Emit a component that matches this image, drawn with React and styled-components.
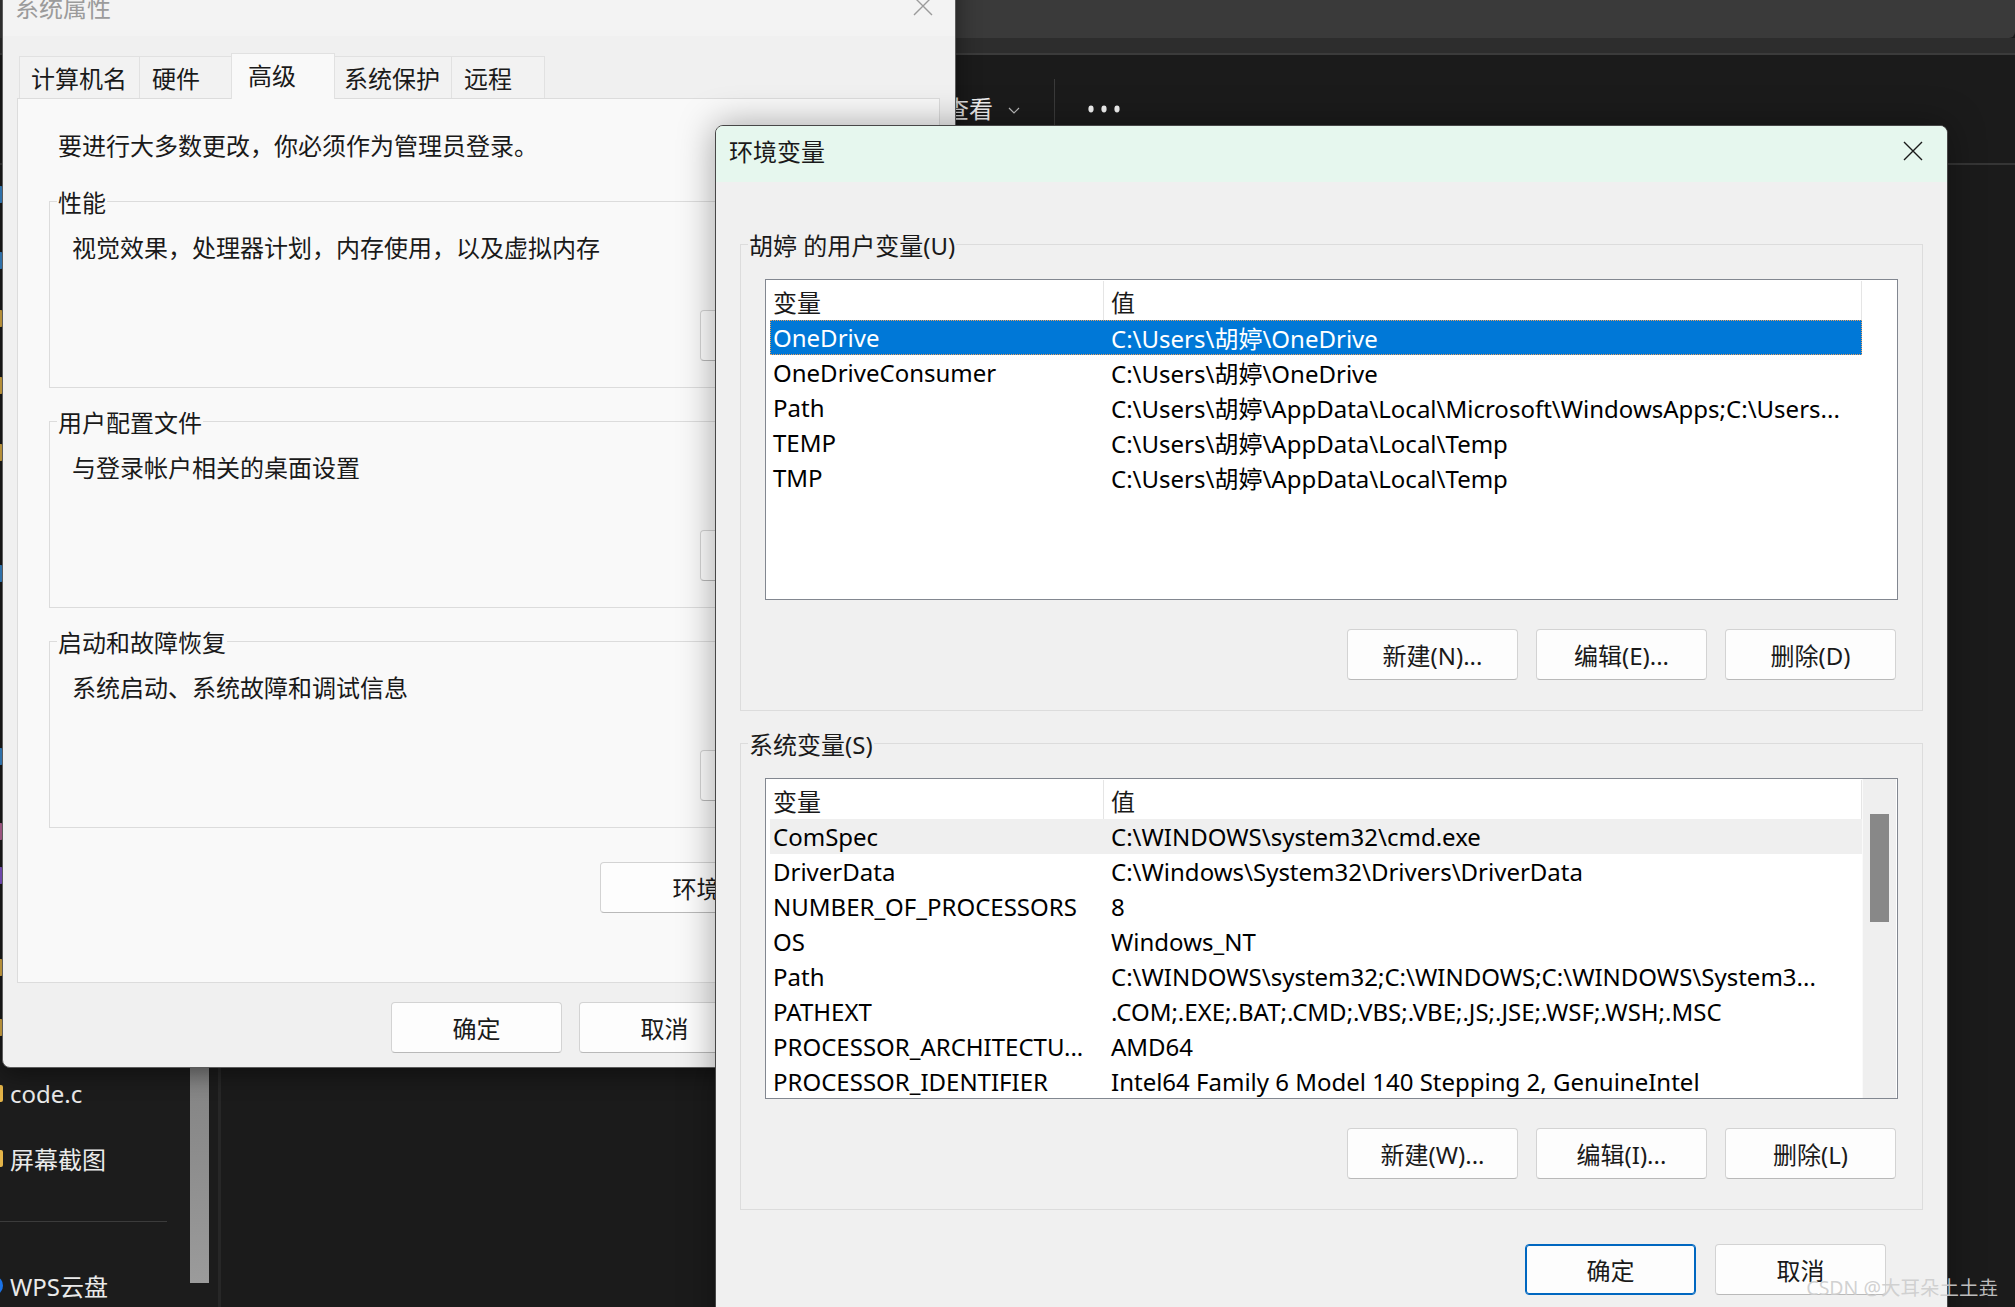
import React from "react";
import styled, { createGlobalStyle, css } from "styled-components";

const GlobalStyle = createGlobalStyle`
  html, body {
    margin: 0;
    padding: 0;
    background: #1b1b1b;
  }
  body {
    width: 2015px;
    height: 1307px;
    overflow: hidden;
    font-family: "Noto Sans", "Noto Sans CJK SC", sans-serif;
    font-size: 24px;
  }
`;

// ---- dark explorer window behind the dialogs ----

const Desktop = styled.div`
  position: relative;
  width: 2015px;
  height: 1307px;
  overflow: hidden;
  background: #1b1b1b;
  display: flex;
  flex-direction: column;
`;

const CaptionBand = styled.div`
  height: 38px;
  flex-shrink: 0;
  background: #3a3a3a;
  border-bottom-right-radius: 6px;
`;

const AddressBand = styled.div`
  height: 15px;
  flex-shrink: 0;
  background: #2d2d2d;
  border-bottom: 2px solid #3b3b3b;
`;

const Toolbar = styled.div`
  height: 108px;
  flex-shrink: 0;
  display: flex;
  align-items: center;
  padding-left: 945px;
  border-bottom: 2px solid #353535;
  color: #f3f3f3;
  font-size: 24px;
`;

const ToolText = styled.span`
  line-height: 1;
`;

const Chevron = styled.svg`
  margin-left: 15px;
  margin-top: 4px;
`;

const ToolSeparator = styled.div`
  width: 1px;
  height: 60px;
  background: #3a3a3a;
  margin-left: 34px;
`;

const MoreDots = styled.svg`
  margin-left: 33px;
`;

const MainRow = styled.div`
  flex: 1;
  display: flex;
  min-height: 0;
`;

const Sidebar = styled.div`
  width: 218px;
  flex-shrink: 0;
  display: flex;
  border-right: 3px solid #272727;
  background: #1c1c1c;
`;

const NavList = styled.div`
  width: 190px;
  display: flex;
  flex-direction: column;
  justify-content: flex-end;
  overflow: hidden;
`;

const NavItem = styled.div`
  height: 44px;
  flex-shrink: 0;
  display: flex;
  align-items: center;
  margin-top: ${(p) => p.$gap}px;
  color: #eaeaea;
  font-size: 24px;
  white-space: nowrap;
`;

const NavIcon = styled.span`
  width: 14px;
  height: 17px;
  margin-left: -11px;
  margin-right: 7px;
  border-radius: ${(p) => (p.$round ? "50%" : "2px")};
  background: ${(p) => p.$color};
  flex-shrink: 0;
`;

const NavDivider = styled.div`
  width: 167px;
  height: 1px;
  flex-shrink: 0;
  background: #3b3b3b;
  margin-top: 41px;
`;

const ScrollTrack = styled.div`
  width: 19px;
  display: flex;
  flex-direction: column;
  justify-content: flex-end;
  padding-bottom: 24px;
`;

const ScrollThumb = styled.div`
  height: 420px;
  background: linear-gradient(#6c6c6c, #9b9b9b);
`;

const ContentArea = styled.div`
  flex: 1;
  background: #1b1b1b;
`;

// ---- generic window pieces ----

const Window = styled.div`
  position: absolute;
  box-sizing: border-box;
  display: flex;
  flex-direction: column;
  overflow: hidden;
  color: #1a1a1a;
`;

const SysWindow = styled(Window)`
  left: 2px;
  top: -30px;
  width: 954px;
  height: 1098px;
  background: #f0f0f0;
  border: 1px solid #5c5c5c;
  border-radius: 8px;
  box-shadow: 0 6px 24px rgba(0, 0, 0, 0.45);
`;

const EnvWindow = styled(Window)`
  left: 715px;
  top: 125px;
  width: 1233px;
  height: 1250px;
  background: #f0f0f0;
  border: 1px solid #474747;
  border-radius: 8px 8px 0 0;
  box-shadow: 0 0 36px rgba(0, 0, 0, 0.35);
`;

const TitleBar = styled.div`
  flex-shrink: 0;
  display: flex;
  align-items: center;
  justify-content: space-between;
  box-sizing: border-box;
  ${(p) =>
    p.$active
      ? css`
          height: 56px;
          padding: 0 24px 7px 13px;
          background: #e6f7ee;
          color: #1a1a1a;
        `
      : css`
          height: 65px;
          padding: 5px 22px 0 12px;
          background: #f3f3f3;
          color: #9b9b9b;
        `}
`;

const CloseGlyph = ({ color }) => (
  <svg width="20" height="20" viewBox="0 0 20 20">
    <path d="M1 1 L19 19 M19 1 L1 19" stroke={color} strokeWidth="1.4" fill="none" />
  </svg>
);

const PushButton = styled.button`
  width: ${(p) => p.$w || 171}px;
  height: 51px;
  flex-shrink: 0;
  box-sizing: border-box;
  padding: 0 ${(p) => p.$shift || 0}px 0 0;
  border: 1px solid #d3d3d3;
  border-bottom-color: #b9b9b9;
  border-radius: 4px;
  background: #fdfdfd;
  color: #1a1a1a;
  font-family: inherit;
  font-size: 24px;
  ${(p) =>
    p.$primary &&
    css`
      border-color: #0067c0;
      box-shadow: inset 0 0 0 1px #0067c0;
    `}
`;

const ButtonRow = styled.div`
  display: flex;
  justify-content: flex-end;
  gap: ${(p) => p.$gap || 18}px;
  margin-top: ${(p) => p.$top || 0}px;
  padding-right: ${(p) => p.$right || 0}px;
`;

const Group = styled.fieldset`
  margin: 0;
  padding: 0;
  min-width: 0;
  border: 1px solid #dcdcdc;
  margin-top: ${(p) => p.$top || 0}px;
`;

const GroupLabel = styled.legend`
  margin-left: 7px;
  padding: 4px 1px 0 1px;
  line-height: 30px;
  font-size: 24px;
  color: #1a1a1a;
`;

// ---- system properties dialog ----

const SysBody = styled.div`
  flex: 1;
  display: flex;
  flex-direction: column;
  padding: 17px 15px 0 14px;
`;

const TabStrip = styled.div`
  display: flex;
  align-items: flex-end;
  height: 45px;
  padding-left: 3px;
`;

const Tab = styled.div`
  width: ${(p) => p.$w}px;
  box-sizing: border-box;
  display: flex;
  align-items: center;
  padding-left: ${(p) => p.$pad}px;
  margin-left: -1px;
  border: 1px solid #e1e1e1;
  border-bottom: none;
  font-size: 24px;
  ${(p) =>
    p.$active
      ? css`
          height: 46px;
          margin-bottom: -1px;
          padding-bottom: 5px;
          position: relative;
          z-index: 2;
          background: #f9f9f9;
        `
      : css`
          height: 42px;
          padding-bottom: 1px;
          background: #f2f2f2;
        `}
`;

const TabPanel = styled.div`
  height: 885px;
  box-sizing: border-box;
  border: 1px solid #dcdcdc;
  background: #f9f9f9;
  padding: 29px 30px 0 40px;
  display: flex;
  flex-direction: column;
`;

const Notice = styled.div`
  line-height: 35px;
`;

const SysGroup = styled(Group)`
  margin-left: -9px;
  margin-top: ${(p) => p.$top}px;
`;

const SysGroupBody = styled.div`
  display: flex;
  flex-direction: column;
  padding: 12px 18px 26px 22px;
`;

const GroupText = styled.div`
  line-height: 35px;
`;

const SysFooter = styled(ButtonRow)`
  margin-top: 19px;
  padding-right: 2px;
`;

// ---- environment variables dialog ----

const EnvBody = styled.div`
  flex: 1;
  display: flex;
  flex-direction: column;
  padding: 45px 24px 0 24px;
`;

const EnvGroupBody = styled.div`
  display: flex;
  flex-direction: column;
  padding: 18px 24px 30px 24px;
`;

const ListBox = styled.div`
  height: 321px;
  box-sizing: border-box;
  display: flex;
  border: 1px solid #828790;
  background: #fff;
  padding: 1px 0 0 4px;
  overflow: hidden;
`;

const ListTable = styled.div`
  width: 1092px;
  flex-shrink: 0;
  display: flex;
  flex-direction: column;
`;

const HeaderRow = styled.div`
  height: 39px;
  flex-shrink: 0;
  display: flex;
`;

const HeaderCell = styled.div`
  box-sizing: border-box;
  width: ${(p) => p.$w}px;
  padding: 1px 0 0 ${(p) => p.$pad}px;
  display: flex;
  align-items: center;
  border-right: 1px solid #e5e5e5;
  color: #1a1a1a;
`;

const Row = styled.div`
  height: 35px;
  flex-shrink: 0;
  box-sizing: border-box;
  display: flex;
  align-items: center;
  color: #000;
  ${(p) =>
    p.$state === "selected" &&
    css`
      background: #0078d7;
      color: #fff;
      outline: 1px dotted #e7a061;
      outline-offset: -1px;
    `}
  ${(p) =>
    p.$state === "hover" &&
    css`
      background: #efefef;
    `}
`;

const Cell = styled.div`
  box-sizing: border-box;
  width: ${(p) => (p.$w ? `${p.$w}px` : "auto")};
  flex: ${(p) => (p.$w ? "0 0 auto" : "1")};
  padding-left: ${(p) => p.$pad}px;
  white-space: nowrap;
  overflow: hidden;
`;

const Gutter = styled.div`
  width: 34px;
  flex-shrink: 0;
  margin-top: -1px;
  background: ${(p) => (p.$scroll ? "#efefef" : "#fff")};
  border-left: ${(p) => (p.$scroll ? "1px solid #fafafa" : "none")};
  box-sizing: border-box;
  padding: 35px 7px 0 7px;
`;

const GutterThumb = styled.div`
  height: 108px;
  background: #888;
`;

const EnvFooter = styled(ButtonRow)`
  margin-top: 34px;
  padding-right: 37px;
`;

const Watermark = styled.div`
  position: absolute;
  right: 17px;
  top: 1274px;
  font-size: 19.5px;
  line-height: 28px;
  color: rgba(205, 205, 205, 0.92);
  white-space: nowrap;
`;

const navItems = [
  { label: "此电脑", color: "#3c8fd6", gap: 9 },
  { label: "桌面", color: "#3c8fd6", gap: 22 },
  { label: "下载", color: "#e4b448", gap: 14 },
  { label: "文档", color: "#e4b448", gap: 23 },
  { label: "图片", color: "#e4b448", gap: 23 },
  { label: "音乐", color: "#3c8fd6", gap: 77 },
  { label: "视频", color: "#3c8fd6", gap: 139 },
  { label: "收藏", color: "#c26aa0", gap: 31 },
  { label: "项目", color: "#8a5ad6", gap: 0 },
  { label: "资料", color: "#e4b448", gap: 48 },
  { label: "笔记", color: "#e4b448", gap: 16 },
  { label: "code.c", color: "#e4b448", gap: 22 },
  { label: "屏幕截图", color: "#e4b448", gap: 21 },
];

const userVars = [
  ["OneDrive", "C:\\Users\\胡婷\\OneDrive", "selected"],
  ["OneDriveConsumer", "C:\\Users\\胡婷\\OneDrive"],
  ["Path", "C:\\Users\\胡婷\\AppData\\Local\\Microsoft\\WindowsApps;C:\\Users..."],
  ["TEMP", "C:\\Users\\胡婷\\AppData\\Local\\Temp"],
  ["TMP", "C:\\Users\\胡婷\\AppData\\Local\\Temp"],
];

const systemVars = [
  ["ComSpec", "C:\\WINDOWS\\system32\\cmd.exe", "hover"],
  ["DriverData", "C:\\Windows\\System32\\Drivers\\DriverData"],
  ["NUMBER_OF_PROCESSORS", "8"],
  ["OS", "Windows_NT"],
  ["Path", "C:\\WINDOWS\\system32;C:\\WINDOWS;C:\\WINDOWS\\System3..."],
  ["PATHEXT", ".COM;.EXE;.BAT;.CMD;.VBS;.VBE;.JS;.JSE;.WSF;.WSH;.MSC"],
  ["PROCESSOR_ARCHITECTU...", "AMD64"],
  ["PROCESSOR_IDENTIFIER", "Intel64 Family 6 Model 140 Stepping 2, GenuineIntel"],
  ["PROCESSOR_LEVEL", "6"],
];

const VarList = ({ rows, scroll }) => (
  <ListBox>
    <ListTable>
      <HeaderRow>
        <HeaderCell $w={334} $pad={3}>变量</HeaderCell>
        <HeaderCell $w={758} $pad={7}>值</HeaderCell>
      </HeaderRow>
      {rows.map(([name, value, state]) => (
        <Row key={name + value} $state={state}>
          <Cell $w={334} $pad={3}>{name}</Cell>
          <Cell $pad={7}>{value}</Cell>
        </Row>
      ))}
    </ListTable>
    <Gutter $scroll={scroll}>{scroll && <GutterThumb />}</Gutter>
  </ListBox>
);

const VarGroup = ({ title, rows, scroll, buttons, top }) => (
  <Group $top={top}>
    <GroupLabel>{title}</GroupLabel>
    <EnvGroupBody>
      <VarList rows={rows} scroll={scroll} />
      <ButtonRow $top={29} $right={2}>
        {buttons.map((b) => (
          <PushButton key={b}>{b}</PushButton>
        ))}
      </ButtonRow>
    </EnvGroupBody>
  </Group>
);

const sysGroups = [
  { title: "性能", text: "视觉效果，处理器计划，内存使用，以及虚拟内存", top: 21 },
  { title: "用户配置文件", text: "与登录帐户相关的桌面设置", top: 16 },
  { title: "启动和故障恢复", text: "系统启动、系统故障和调试信息", top: 16 },
];

const tabs = [
  { label: "计算机名", w: 121, pad: 11 },
  { label: "硬件", w: 93, pad: 12 },
  { label: "高级", w: 104, pad: 16, active: true },
  { label: "系统保护", w: 118, pad: 9 },
  { label: "远程", w: 94, pad: 12 },
];

const App = () => {
  return (
    <>
      <GlobalStyle />
      <Desktop>
        <CaptionBand />
        <AddressBand />
        <Toolbar>
          <ToolText>查看</ToolText>
          <Chevron width="12" height="8" viewBox="0 0 12 8">
            <polyline points="1,1 6,6 11,1" stroke="#bdbdbd" strokeWidth="1.2" fill="none" />
          </Chevron>
          <ToolSeparator />
          <MoreDots width="32" height="10" viewBox="0 0 32 10">
            <ellipse cx="3" cy="5" rx="2.6" ry="3.4" fill="#f3f3f3" />
            <ellipse cx="16" cy="5" rx="2.6" ry="3.4" fill="#f3f3f3" />
            <ellipse cx="29" cy="5" rx="2.6" ry="3.4" fill="#f3f3f3" />
          </MoreDots>
        </Toolbar>
        <MainRow>
          <Sidebar>
            <NavList>
              {navItems.map((item) => (
                <NavItem key={item.label} $gap={item.gap}>
                  <NavIcon $color={item.color} />
                  {item.label}
                </NavItem>
              ))}
              <NavDivider />
              <NavItem $gap={41}>
                <NavIcon $color="#1a73e8" $round />
                WPS云盘
              </NavItem>
            </NavList>
            <ScrollTrack>
              <ScrollThumb />
            </ScrollTrack>
          </Sidebar>
          <ContentArea />
        </MainRow>

        <SysWindow>
          <TitleBar>
            <span>系统属性</span>
            <CloseGlyph color="#9b9b9b" />
          </TitleBar>
          <SysBody>
            <TabStrip>
              {tabs.map((t) => (
                <Tab key={t.label} $w={t.w} $pad={t.pad} $active={t.active}>
                  {t.label}
                </Tab>
              ))}
            </TabStrip>
            <TabPanel>
              <Notice>要进行大多数更改，你必须作为管理员登录。</Notice>
              {sysGroups.map((g) => (
                <SysGroup key={g.title} $top={g.top}>
                  <GroupLabel>{g.title}</GroupLabel>
                  <SysGroupBody>
                    <GroupText>{g.text}</GroupText>
                    <ButtonRow $top={45}>
                      <PushButton $w={190}>设置(S)...</PushButton>
                    </ButtonRow>
                  </SysGroupBody>
                </SysGroup>
              ))}
              <ButtonRow $top={34}>
                <PushButton $w={309} $shift={16}>环境变量(N)...</PushButton>
              </ButtonRow>
            </TabPanel>
            <SysFooter $gap={17}>
              <PushButton>确定</PushButton>
              <PushButton>取消</PushButton>
              <PushButton>应用(A)</PushButton>
            </SysFooter>
          </SysBody>
        </SysWindow>

        <EnvWindow>
          <TitleBar $active>
            <span>环境变量</span>
            <CloseGlyph color="#1a1a1a" />
          </TitleBar>
          <EnvBody>
            <VarGroup
              title="胡婷 的用户变量(U)"
              rows={userVars}
              buttons={["新建(N)...", "编辑(E)...", "删除(D)"]}
            />
            <VarGroup
              title="系统变量(S)"
              rows={systemVars}
              scroll
              top={15}
              buttons={["新建(W)...", "编辑(I)...", "删除(L)"]}
            />
            <EnvFooter $gap={19}>
              <PushButton $primary>确定</PushButton>
              <PushButton>取消</PushButton>
            </EnvFooter>
          </EnvBody>
        </EnvWindow>

        <Watermark>CSDN @大耳朵土土垚</Watermark>
      </Desktop>
    </>
  );
};

export default App;
